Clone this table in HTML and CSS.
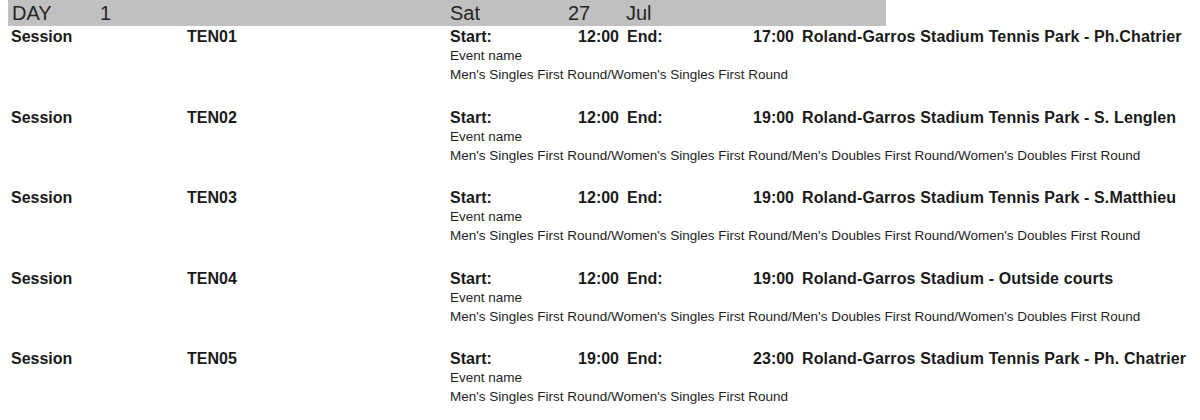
FILE: index.html
```html
<!DOCTYPE html>
<html>
<head>
<meta charset="utf-8">
<link rel="stylesheet" href="styles.css">
</head>
<body>
<div class="daybar">
  <span class="d-day">DAY</span>
  <span class="d-num">1</span>
  <span class="d-wd">Sat</span>
  <span class="d-date">27</span>
  <span class="d-mon">Jul</span>
</div>

<div class="session">
  <div class="main">
    <span class="c-label">Session</span>
    <span class="c-code">TEN01</span>
    <span class="c-start">Start:</span>
    <span class="c-t1">12:00</span>
    <span class="c-end">End:</span>
    <span class="c-t2">17:00</span>
    <span class="c-venue">Roland-Garros Stadium Tennis Park - Ph.Chatrier</span>
  </div>
  <div class="ev">Event name</div>
  <div class="ev">Men's Singles First Round/Women's Singles First Round</div>
</div>

<div class="session">
  <div class="main">
    <span class="c-label">Session</span>
    <span class="c-code">TEN02</span>
    <span class="c-start">Start:</span>
    <span class="c-t1">12:00</span>
    <span class="c-end">End:</span>
    <span class="c-t2">19:00</span>
    <span class="c-venue">Roland-Garros Stadium Tennis Park - S. Lenglen</span>
  </div>
  <div class="ev">Event name</div>
  <div class="ev">Men's Singles First Round/Women's Singles First Round/Men's Doubles First Round/Women's Doubles First Round</div>
</div>

<div class="session">
  <div class="main">
    <span class="c-label">Session</span>
    <span class="c-code">TEN03</span>
    <span class="c-start">Start:</span>
    <span class="c-t1">12:00</span>
    <span class="c-end">End:</span>
    <span class="c-t2">19:00</span>
    <span class="c-venue">Roland-Garros Stadium Tennis Park - S.Matthieu</span>
  </div>
  <div class="ev">Event name</div>
  <div class="ev">Men's Singles First Round/Women's Singles First Round/Men's Doubles First Round/Women's Doubles First Round</div>
</div>

<div class="session">
  <div class="main">
    <span class="c-label">Session</span>
    <span class="c-code">TEN04</span>
    <span class="c-start">Start:</span>
    <span class="c-t1">12:00</span>
    <span class="c-end">End:</span>
    <span class="c-t2">19:00</span>
    <span class="c-venue">Roland-Garros Stadium - Outside courts</span>
  </div>
  <div class="ev">Event name</div>
  <div class="ev">Men's Singles First Round/Women's Singles First Round/Men's Doubles First Round/Women's Doubles First Round</div>
</div>

<div class="session">
  <div class="main">
    <span class="c-label">Session</span>
    <span class="c-code">TEN05</span>
    <span class="c-start">Start:</span>
    <span class="c-t1">19:00</span>
    <span class="c-end">End:</span>
    <span class="c-t2">23:00</span>
    <span class="c-venue">Roland-Garros Stadium Tennis Park - Ph. Chatrier</span>
  </div>
  <div class="ev">Event name</div>
  <div class="ev">Men's Singles First Round/Women's Singles First Round</div>
</div>
</body>
</html>
```

FILE: styles.css
```css
html, body {
  margin: 0;
  padding: 0;
  background: #ffffff;
}
body {
  font-family: "Liberation Sans", Arial, sans-serif;
  color: #1a1a1a;
  width: 1200px;
  height: 420px;
  overflow: hidden;
}
.daybar {
  margin-left: 8px;
  width: 878px;
  height: 26px;
  background: #c0c0c0;
  display: grid;
  grid-template-columns: 88px 350px 118px 58px 1fr;
  padding-left: 4px;
  box-sizing: border-box;
  font-size: 20px;
  line-height: 26px;
  color: #262626;
}
.session {
  height: 80.5px;
  padding-top: 2px;
  box-sizing: border-box;
}
.main {
  display: grid;
  grid-template-columns: 176px 263px 116px 53px 8px 110px 57px 8px auto;
  padding-left: 11px;
  font-size: 16px;
  font-weight: bold;
  line-height: 17px;
  white-space: nowrap;
}
.c-label { grid-column: 1; }
.c-code { grid-column: 2; }
.c-start { grid-column: 3; }
.c-t1 { grid-column: 4; text-align: right; }
.c-end { grid-column: 6; }
.c-t2 { grid-column: 7; text-align: right; }
.c-venue { grid-column: 9; letter-spacing: 0.12px; }
.ev {
  padding-left: 450px;
  font-size: 13.5px;
  line-height: 19px;
  white-space: nowrap;
  color: #1e1e1e;
}
.main + .ev {
  margin-top: 1px;
}
```
